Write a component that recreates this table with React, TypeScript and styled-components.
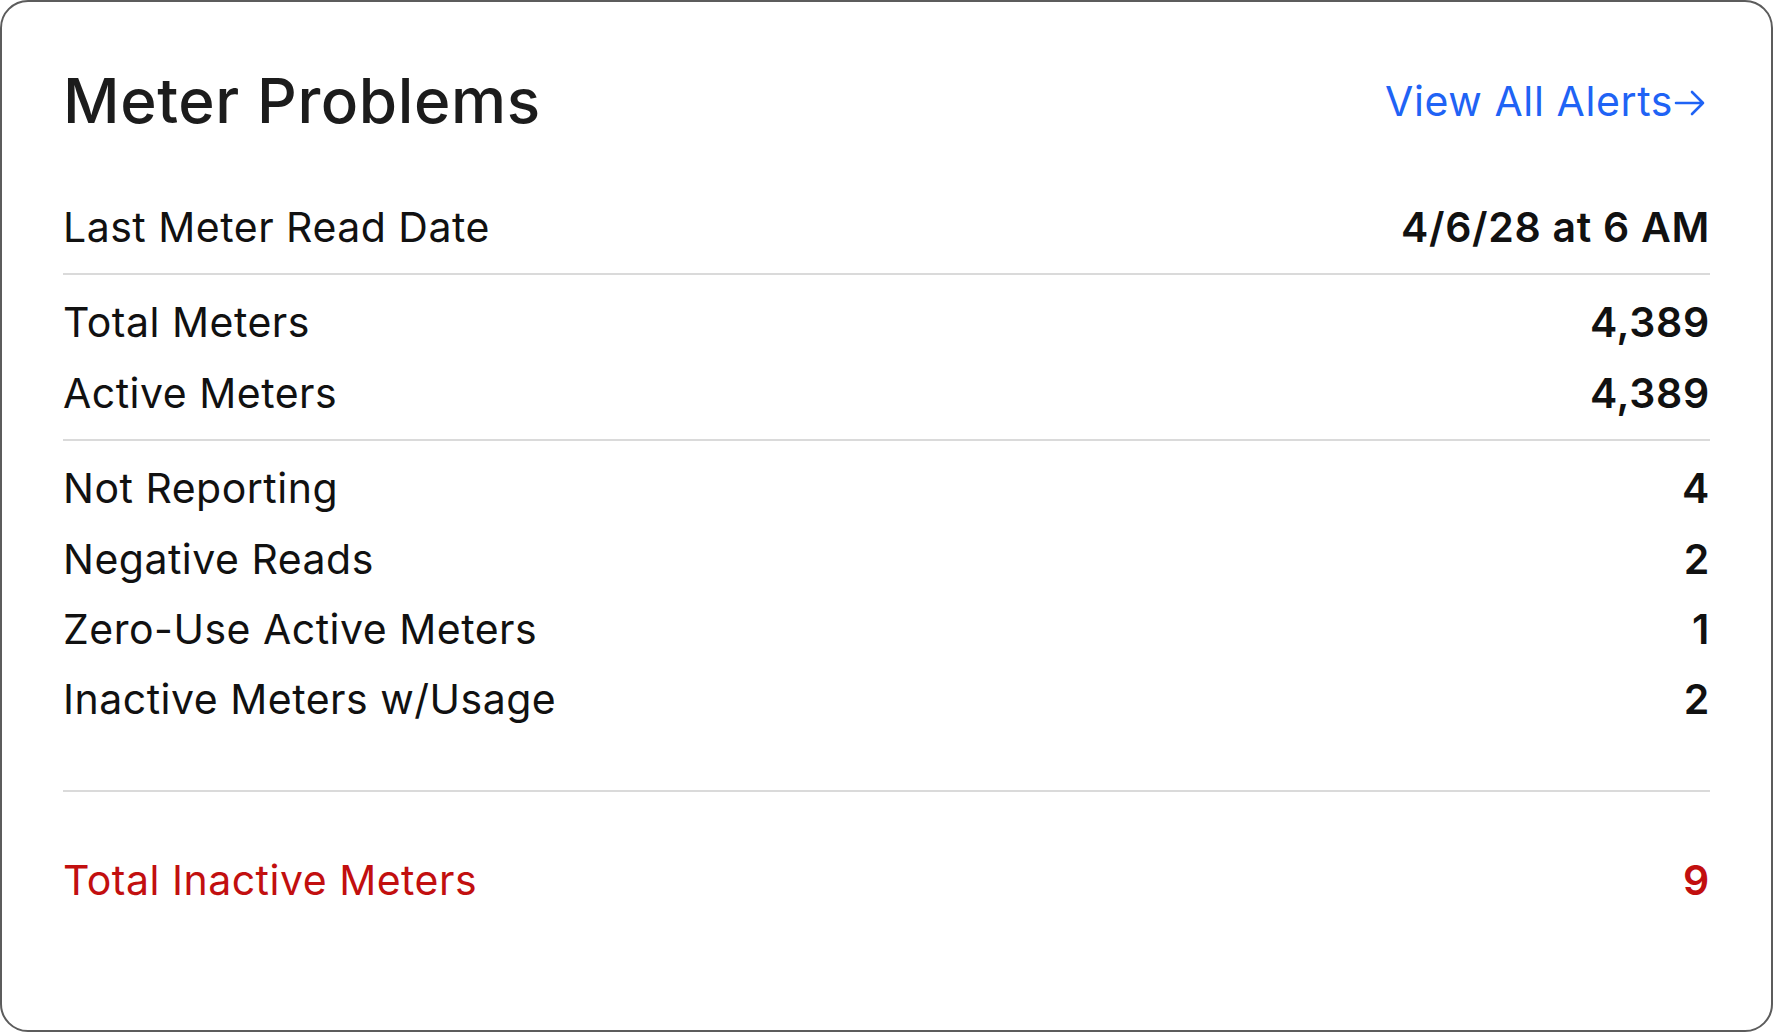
import styled, { createGlobalStyle } from 'styled-components'

const GlobalStyle = createGlobalStyle`
  html, body {
    margin: 0;
    padding: 0;
    background: #ffffff;
  }
  body {
    font-family: Inter, "Noto Sans", "Liberation Sans", sans-serif;
    -webkit-font-smoothing: antialiased;
  }
  * {
    box-sizing: border-box;
  }
`

const Card = styled.div`
  height: 1032px;
  padding: 62px 61px 0 61px;
  border: 2px solid #5c5c5c;
  border-radius: 28px;
  background: #ffffff;
  display: flex;
  flex-direction: column;
`

const Header = styled.div`
  display: flex;
  align-items: center;
  justify-content: space-between;
  height: 74px;
`

const Title = styled.h1`
  margin: 0;
  font-size: 62px;
  line-height: 74px;
  font-weight: 500;
  color: #1c1c1c;
  letter-spacing: 0.6px;
`

const AlertsLink = styled.a`
  margin-right: 4px;
  font-size: 41px;
  line-height: 50px;
  letter-spacing: 0.6px;
  color: #1f63f5;
  text-decoration: none;
  display: flex;
  align-items: center;
  cursor: pointer;
`

const Arrow = styled.svg`
  width: 32px;
  height: 28px;
  margin-left: 1px;
  margin-top: 3px;
`

const Section = styled.div<{ $top: number; $bottom: number }>`
  display: flex;
  flex-direction: column;
  padding-top: ${p => p.$top}px;
  padding-bottom: ${p => p.$bottom}px;
`

const Divider = styled.div`
  height: 2px;
  background: #dadada;
`

const Row = styled.div<{ $alert?: boolean }>`
  display: flex;
  justify-content: space-between;
  align-items: baseline;
  height: 70.4px;
  font-size: 41px;
  line-height: 70.4px;
  letter-spacing: 0.5px;
  color: ${p => (p.$alert ? '#c20f0f' : '#111111')};
`

const Label = styled.span`
  font-weight: 400;
`

const Value = styled.span`
  font-weight: 600;
  letter-spacing: 0.7px;
`

type Item = { label: string; value: string }

const groups: { top: number; bottom: number; items: Item[] }[] = [
  { top: 54, bottom: 11, items: [{ label: 'Last Meter Read Date', value: '4/6/28 at 6 AM' }] },
  {
    top: 12,
    bottom: 11,
    items: [
      { label: 'Total Meters', value: '4,389' },
      { label: 'Active Meters', value: '4,389' },
    ],
  },
  {
    top: 12,
    bottom: 55,
    items: [
      { label: 'Not Reporting', value: '4' },
      { label: 'Negative Reads', value: '2' },
      { label: 'Zero-Use Active Meters', value: '1' },
      { label: 'Inactive Meters w/Usage', value: '2' },
    ],
  },
]

const App = () => {
  return (
    <>
      <GlobalStyle />
      <Card>
        <Header>
          <Title>Meter Problems</Title>
          <AlertsLink>
            View All Alerts
            <Arrow viewBox="0 0 32 28" fill="none" stroke="currentColor" strokeWidth="2.6" strokeLinecap="round" strokeLinejoin="round">
              <path d="M2 14 H29 M18 3 L29 14 L18 25" />
            </Arrow>
          </AlertsLink>
        </Header>
        {groups.map((g, i) => (
          <div key={i}>
            <Section $top={g.top} $bottom={g.bottom}>
              {g.items.map(item => (
                <Row key={item.label}>
                  <Label>{item.label}</Label>
                  <Value>{item.value}</Value>
                </Row>
              ))}
            </Section>
            <Divider />
          </div>
        ))}
        <Section $top={53} $bottom={0}>
          <Row $alert>
            <Label>Total Inactive Meters</Label>
            <Value>9</Value>
          </Row>
        </Section>
      </Card>
    </>
  )
}

export default App
